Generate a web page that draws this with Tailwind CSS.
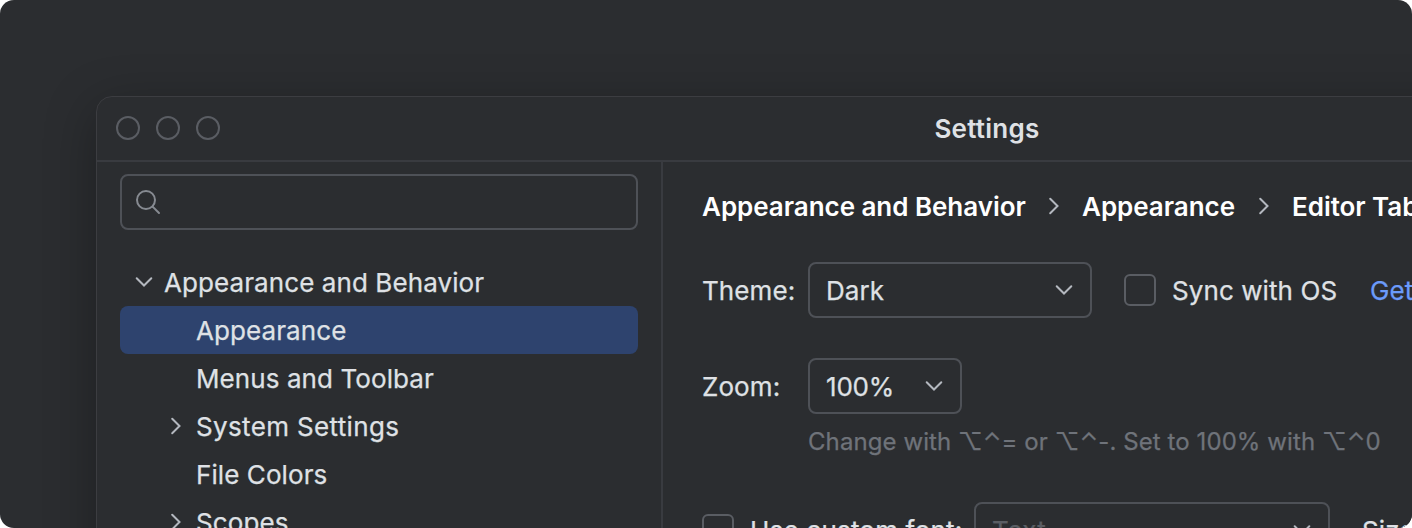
<!DOCTYPE html>
<html lang="en">
<head>
<meta charset="utf-8">
<title>Settings</title>
<script src="https://cdn.jsdelivr.net/npm/@tailwindcss/browser@4"></script>
</head>
<body class="bg-white">
<svg class="hidden">
  <symbol id="down" viewBox="0 0 32 32"><path d="M8.7 12.2 16 19.5l7.3-7.3" fill="none" stroke="currentColor" stroke-width="2" stroke-linecap="round"/></symbol>
  <symbol id="right" viewBox="0 0 32 32"><path d="M12.2 8.7 19.5 16l-7.3 7.3" fill="none" stroke="currentColor" stroke-width="2" stroke-linecap="round"/></symbol>
</svg>
<div class="w-[1412px] h-[528px] overflow-hidden rounded-[14px] bg-[#2b2d30] pl-24 pt-24 font-['Inter',sans-serif] tracking-[0.085px] [-webkit-text-stroke:0.25px] text-[26px] leading-[50px] text-[#dfe1e5] whitespace-nowrap">
  <div class="w-[1780px] h-[900px] rounded-2xl border border-[#3c3d41] bg-[#2b2d30] shadow-[0_12px_52px_rgba(0,0,0,0.3)] flex flex-col">
    <header class="h-[65px] shrink-0 border-b-2 border-[#393b40] flex items-center relative">
      <div class="flex gap-4 pl-[19px] pb-px">
        <span class="size-6 rounded-full border-2 border-[#5a5d63]"></span>
        <span class="size-6 rounded-full border-2 border-[#5a5d63]"></span>
        <span class="size-6 rounded-full border-2 border-[#5a5d63]"></span>
      </div>
      <h1 class="w-full pl-0.5 text-center font-semibold absolute inset-x-0 tracking-[0.25px] [-webkit-text-stroke:0]">Settings</h1>
    </header>
    <div class="flex flex-1">
      <aside class="w-[566px] shrink-0 border-r-2 border-[#393b40] pl-[23px] pr-[23px] pt-3">
        <div class="h-14 rounded-lg border-2 border-[#4e5157] flex items-center pl-3">
          <svg class="size-8 text-[#868a91]" viewBox="0 0 32 32" fill="none" stroke="currentColor" stroke-width="2" stroke-linecap="round"><circle cx="12" cy="14" r="9"/><path d="m18.6 20.6 6.4 6.4"/></svg>
        </div>
        <nav class="pt-7">
          <div class="h-12 flex pl-2"><svg class="size-8 mt-2 mr-1 text-[#b4b8bf]"><use href="#down"/></svg>Appearance and Behavior</div>
          <div class="h-12 rounded-lg bg-[#2e436e] pl-[76px]">Appearance</div>
          <div class="h-12 pl-[76px]">Menus and Toolbar</div>
          <div class="h-12 flex pl-10 tracking-[0.35px]"><svg class="size-8 mt-2 mr-1 text-[#b4b8bf]"><use href="#right"/></svg>System Settings</div>
          <div class="h-12 pl-[76px]">File Colors</div>
          <div class="h-12 flex pl-10"><svg class="size-8 mt-2 mr-1 text-[#b4b8bf]"><use href="#right"/></svg>Scopes</div>
        </nav>
      </aside>
      <main class="flex-1 pl-[39px]">
        <div class="h-[88px] flex items-center font-semibold text-white pt-px tracking-[-0.04px] [-webkit-text-stroke:0]">
          <span class="w-[335.5px]">Appearance and Behavior</span>
          <svg class="size-8 mr-[12.5px] -mt-px text-[#b4b8bf]"><use href="#right"/></svg>
          <span class="w-[165.5px]">Appearance</span>
          <svg class="size-8 mr-[12.5px] -mt-px text-[#b4b8bf]"><use href="#right"/></svg>
          <span>Editor Tabs</span>
        </div>
        <div class="h-14 mt-3 flex items-center">
          <span class="w-[106px] pt-0.5">Theme:</span>
          <div class="w-[284px] h-14 rounded-lg border-2 border-[#4e5157] flex items-center justify-between pl-4 pr-[10px]"><span class="pt-0.5">Dark</span><svg class="size-8 text-[#b4b8bf]"><use href="#down"/></svg></div>
          <span class="size-8 ml-8 mr-4 rounded-md border-2 border-[#5a5d63]"></span>
          <span class="w-[198px] pt-0.5">Sync with OS</span>
          <span class="pt-0.5 text-[#6b9bfa]">Get plugins</span>
        </div>
        <div class="h-14 mt-10 flex items-center">
          <span class="w-[106px] pt-0.5">Zoom:</span>
          <div class="w-[154px] h-14 rounded-lg border-2 border-[#4e5157] flex items-center justify-between pl-4 pr-[10px]"><span class="pt-0.5 tracking-[-0.2px]">100%</span><svg class="size-8 text-[#b4b8bf]"><use href="#down"/></svg></div>
        </div>
        <div class="pl-[106px] mt-2 h-10 text-2xl/10 text-[#6f737a]">Change with ⌥⌃= or ⌥⌃-. Set to 100% with ⌥⌃0</div>
        <div class="h-14 mt-10 flex items-center">
          <span class="size-8 mr-4 rounded-md border-2 border-[#5a5d63]"></span>
          <span class="w-[224px] pt-0.5 tracking-[0.2px]">Use custom font:</span>
          <div class="w-[356px] h-14 rounded-lg border-2 border-[#4e5157] flex items-center justify-between pl-4 pr-[10px] text-[#5a5d63]"><span class="pt-0.5 tracking-[0.4px]">Text</span><svg class="size-8 text-[#b4b8bf]"><use href="#down"/></svg></div>
          <span class="ml-8 pt-0.5">Size:</span>
        </div>
      </main>
    </div>
  </div>
</div>
</body>
</html>
